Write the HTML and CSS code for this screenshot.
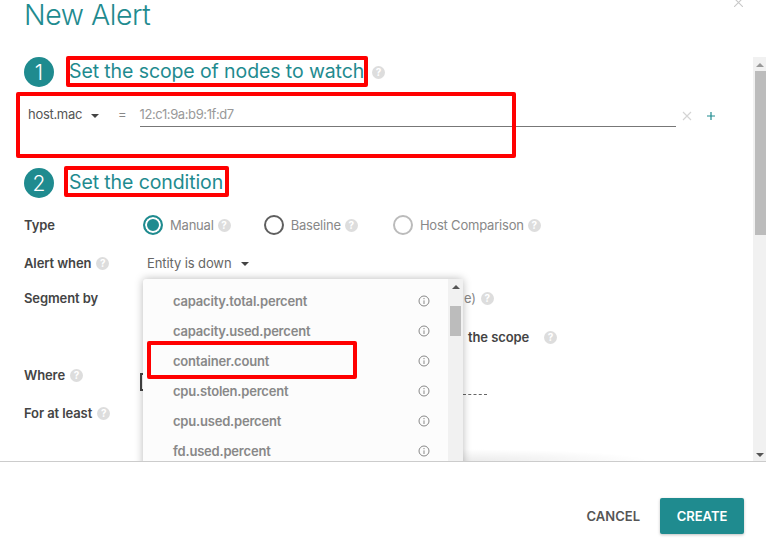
FILE: index.html
```html
<!DOCTYPE html>
<html lang="en">
<head>
<meta charset="utf-8">
<title>New Alert</title>
<link rel="stylesheet" href="styles.css">
</head>
<body>
<div class="modal">
  <div class="main">
    <header class="head">
      <h1 class="title">New Alert</h1>
      <svg class="close" viewBox="0 0 10 10"><path d="M0 0L10 10M10 0L0 10"/></svg>
    </header>
    <div class="body">
      <div class="content">
        <div class="step">
          <span class="num">1</span>
          <h2 class="step-title">Set the scope of nodes to watch</h2>
          <span class="help">?</span>
          <span class="mark mark-scope"></span>
        </div>
        <div class="filter">
          <span class="filter-key">host.mac</span>
          <span class="caret"></span>
          <span class="eq">=</span>
          <span class="filter-val">12:c1:9a:b9:1f:d7</span>
          <svg class="remove" viewBox="0 0 10 10"><path d="M1 1L9 9M9 1L1 9"/></svg>
          <svg class="add" viewBox="0 0 10 10"><path d="M5 1V9M1 5H9"/></svg>
          <span class="mark mark-filter"></span>
        </div>
        <div class="step">
          <span class="num">2</span>
          <h2 class="step-title">Set the condition</h2>
          <span class="mark mark-cond"></span>
        </div>
        <div class="form">
          <div class="row row-type">
            <span class="label">Type</span>
            <div class="value radios">
              <span class="radio on"></span><span class="opt">Manual</span><span class="help">?</span>
              <span class="radio dark gap1"></span><span class="opt">Baseline</span><span class="help">?</span>
              <span class="radio gap2"></span><span class="opt">Host Comparison</span><span class="help">?</span>
            </div>
          </div>
          <div class="row row-when">
            <span class="label">Alert when<span class="help">?</span></span>
            <div class="value when"><span class="opt">Entity is down</span><span class="caret"></span></div>
          </div>
          <div class="row row-seg">
            <span class="label">Segment by</span>
            <div class="value seg">
              <div class="seg-a"><span class="opt">e)</span><span class="help">?</span></div>
              <div class="seg-b"><span class="strong">the scope</span><span class="help">?</span></div>
            </div>
          </div>
          <div class="row row-where">
            <span class="label">Where<span class="help">?</span></span>
            <div class="value where"><span class="box"></span><span class="dash"></span></div>
          </div>
          <div class="row row-for">
            <span class="label">For at least<span class="help">?</span></span>
          </div>
        </div>
        <div class="menu">
          <ul class="menu-list">
            <li class="item"><span>capacity.total.percent</span><svg class="info" viewBox="0 0 12 12"><circle cx="6" cy="6" r="5"/><path d="M6 5.4V9M6 3V4.2"/></svg></li>
            <li class="item"><span>capacity.used.percent</span><svg class="info" viewBox="0 0 12 12"><circle cx="6" cy="6" r="5"/><path d="M6 5.4V9M6 3V4.2"/></svg></li>
            <li class="item"><span>container.count</span><svg class="info" viewBox="0 0 12 12"><circle cx="6" cy="6" r="5"/><path d="M6 5.4V9M6 3V4.2"/></svg></li>
            <li class="item"><span>cpu.stolen.percent</span><svg class="info" viewBox="0 0 12 12"><circle cx="6" cy="6" r="5"/><path d="M6 5.4V9M6 3V4.2"/></svg></li>
            <li class="item"><span>cpu.used.percent</span><svg class="info" viewBox="0 0 12 12"><circle cx="6" cy="6" r="5"/><path d="M6 5.4V9M6 3V4.2"/></svg></li>
            <li class="item"><span>fd.used.percent</span><svg class="info" viewBox="0 0 12 12"><circle cx="6" cy="6" r="5"/><path d="M6 5.4V9M6 3V4.2"/></svg></li>
          </ul>
          <div class="menu-bar"><span class="arrow-up small"></span><span class="menu-thumb"></span></div>
          <span class="menu-fade"></span>
          <span class="mark mark-item"></span>
        </div>
      </div>
      <div class="scrollbar">
        <span class="arrow-up"></span>
        <span class="thumb"></span>
        <span class="arrow-down"></span>
      </div>
    </div>
  </div>
  <footer class="foot">
    <button class="btn-text">CANCEL</button>
    <button class="btn-primary">CREATE</button>
  </footer>
</div>
</body>
</html>
```
FILE: styles.css
```css
* { box-sizing: border-box; }
html, body { margin: 0; height: 100%; }
body {
  background: #fff;
  font-family: "Inter", "Liberation Sans", sans-serif;
  color: #444;
  overflow: hidden;
}
.modal { width: 766px; height: 541px; display: flex; flex-direction: column; }
.main { height: 461px; display: flex; flex-direction: column; overflow: hidden; }
.head { height: 57px; flex: none; position: relative; padding-left: 24px; }
.title { margin: 0; font-size: 28.5px; line-height: 30px; font-weight: 300; color: #1f8b8f; letter-spacing: -0.45px; }
.close { position: absolute; left: 734px; top: -2px; width: 9px; height: 9px; fill: none; stroke: #c8c8c8; stroke-width: 1.2; }
.body { flex: 1; display: flex; min-height: 0; }
.content { flex: 1; position: relative; }
.step { height: 30px; display: flex; align-items: center; padding-left: 24px; position: relative; }
.num {
  width: 30px; height: 30px; border-radius: 50%; background: #1f8b8f; color: #fff;
  font-size: 21px; font-weight: 300; display: flex; align-items: center; justify-content: center;
}
.step-title { margin: -3px 0 0 15px; font-size: 19.5px; line-height: 30px; font-weight: 400; color: #1f8b8f; letter-spacing: -0.1px; }
.step .help { margin-left: 8px; }
.help {
  display: inline-flex; width: 13px; height: 13px; border-radius: 50%; background: #ddd; color: #fff;
  font-size: 10px; font-weight: 700; line-height: 13px; align-items: center; justify-content: center;
}
.filter { height: 81px; position: relative; display: flex; align-items: flex-start; padding: 20px 0 0 28px; font-size: 13px; }
.filter-key { width: 52px; color: #555; line-height: 14px; letter-spacing: -0.3px; white-space: nowrap; }
.filter > .caret { margin: 7px 0 0 11px; }
.eq { margin-left: 19px; color: #888; line-height: 14px; }
.filter-val {
  margin-left: 13px; width: 536px; height: 20px; border-bottom: 1px solid #777; color: #999; line-height: 14px; letter-spacing: -0.4px;
}
.remove { width: 10px; height: 10px; margin: 4px 0 0 6px; fill: none; stroke: #d4d4d4; stroke-width: 1.1; }
.add { width: 10px; height: 10px; margin: 4px 0 0 14px; fill: none; stroke: #1f8b8f; stroke-width: 1.2; }
.caret { display: inline-block; width: 0; height: 0; border: 4px solid transparent; border-top: 4px solid #444; border-bottom: 0; }
.form { padding: 8px 0 0 24px; font-size: 13px; }
.row { display: flex; height: 38px; align-items: center; }
.row-seg { height: 74px; align-items: flex-start; padding-top: 8px; }
.label { width: 119px; flex: none; font-weight: 600; color: #444; letter-spacing: -0.1px; white-space: nowrap; display: flex; align-items: center; }
.label .help { margin-left: 5px; }
.value { display: flex; align-items: center; color: #777; }
.radios .help { margin-left: 4px; }
.opt { letter-spacing: -0.2px; color: #888; }
.radio { width: 20px; height: 20px; border: 2px solid #bbb; border-radius: 50%; margin-right: 7px; position: relative; }
.radio.dark { border-color: #5f5f5f; }
.radio.on { border-color: #1f8b8f; background: #1f8b8f; box-shadow: inset 0 0 0 2px #fff; }
.gap1 { margin-left: 33px; }
.gap2 { margin-left: 35px; }
.when { padding-left: 4px; }
.when .opt { color: #666; letter-spacing: -0.1px; }
.when .caret { margin: 2px 0 0 10px; }
.seg { flex: 1; display: block; padding-left: 321px; }
.seg-a { height: 16px; line-height: 16px; display: flex; align-items: center; }
.seg-a .help { margin-left: 5px; }
.seg-b { margin: 23px 0 0 4px; line-height: 16px; display: flex; align-items: center; }
.strong { font-weight: 600; color: #444; letter-spacing: -0.1px; }
.seg-b .help { margin-left: 15px; }
.where { flex: 1; height: 22px; align-items: flex-start; }
.box { width: 6px; height: 18px; border: 2px solid #444; border-right: 0; margin: 9px 0 0 -3px; }
.dash { width: 24px; border-top: 1px dashed #666; margin: 30px 0 0 317px; }
.menu {
  position: absolute; left: 143px; top: 222px; width: 320px; height: 200px; background: #fcfcfc;
  box-shadow: 0 0 8px rgba(0,0,0,.28); display: flex; border-radius: 3px 3px 0 0;
}
.menu-fade {
  position: absolute; left: 100%; top: 170px; width: 190px; height: 12px;
  background: radial-gradient(ellipse at 0 100%, rgba(0,0,0,.08), transparent 70%);
}
.menu-list { list-style: none; margin: 0; padding: 7px 0 0; flex: 1; font-size: 13px; font-weight: 600; color: #888; letter-spacing: -0.2px; }
.item { height: 30px; display: flex; align-items: center; justify-content: space-between; padding: 0 18px 0 30px; }
.info { width: 12px; height: 12px; fill: none; stroke: #888; stroke-width: 1; }
.menu-bar { width: 15px; background: #f1f1f1; padding-top: 6px; display: flex; flex-direction: column; align-items: center; }
.menu-thumb { width: 11px; height: 30px; background: #bcbcbc; margin-top: 17px; }
.scrollbar { width: 13px; background: #f1f1f1; flex: none; display: flex; flex-direction: column; align-items: center; padding: 6px 0 4px; }
.thumb { width: 11px; height: 164px; background: #bcbcbc; margin-top: 4px; align-self: flex-end; }
.arrow-up { width: 0; height: 0; border: 4px solid transparent; border-bottom: 4px solid #999; border-top: 0; }
.arrow-up.small { border-bottom-color: #555; }
.arrow-down { width: 0; height: 0; border: 4px solid transparent; border-top: 4px solid #555; border-bottom: 0; margin-top: auto; }
.foot { flex: 1; border-top: 1px solid #ccc; display: flex; justify-content: flex-end; align-items: flex-start; padding: 36px 22px 0 0; }
.btn-text { border: 0; background: none; font: 600 13px "Inter", sans-serif; letter-spacing: 0; color: #555; height: 36px; padding: 0; margin-right: 20px; }
.btn-primary {
  border: 0; width: 84px; height: 36px; border-radius: 2px; background: #1f8b8f; color: #fff;
  font: 600 13px "Inter", sans-serif; letter-spacing: 0; box-shadow: 0 1px 3px rgba(0,0,0,.25);
}
.mark { position: absolute; border: 4px solid #f00; border-radius: 2px; pointer-events: none; }
.mark-scope { left: 66px; top: -1px; width: 302px; height: 31px; }
.mark-filter { left: 16px; top: 5px; width: 500px; height: 66px; }
.mark-cond { left: 64px; top: -2px; width: 165px; height: 31px; }
.mark-item { left: 4px; top: 62px; width: 210px; height: 38px; }
```
